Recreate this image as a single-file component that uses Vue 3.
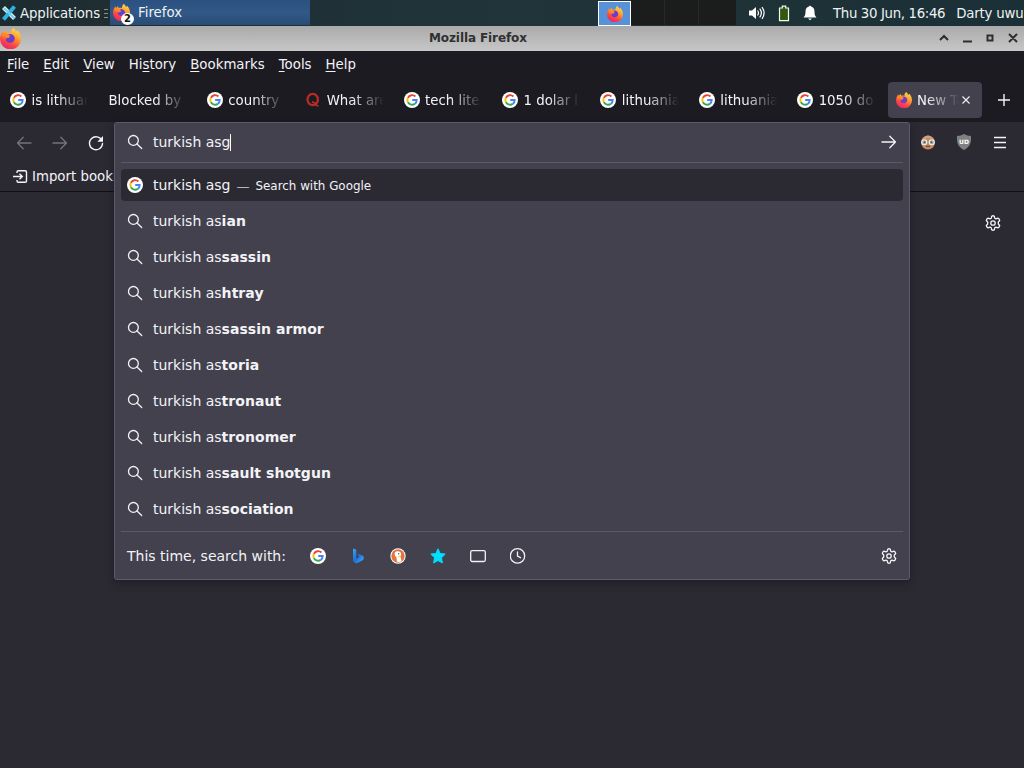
<template>
  <div class="desktop">
    <!-- Shared icon shapes -->
    <svg class="icon-defs" aria-hidden="true">
      <defs>
        <linearGradient id="fox-fill" x1="0.8" y1="0" x2="0.3" y2="1">
          <stop offset="0" stop-color="#ffe14a" />
          <stop offset="0.4" stop-color="#ff9a2e" />
          <stop offset="0.7" stop-color="#ff483f" />
          <stop offset="1" stop-color="#e52270" />
        </linearGradient>
        <linearGradient id="bing-fill" x1="0" y1="0" x2="1" y2="1">
          <stop offset="0" stop-color="#38a7ef" />
          <stop offset="0.5" stop-color="#1b6fe0" />
          <stop offset="1" stop-color="#43b9f2" />
        </linearGradient>
      </defs>
      <symbol id="google" viewBox="0 0 16 16">
        <circle cx="8" cy="8" r="8" fill="#fff" />
        <g fill="none" stroke-width="1.9">
          <path d="M11.4 4.5A4.7 4.7 0 0 0 3.9 5.8" stroke="#ea4335" />
          <path d="M3.9 5.8a4.7 4.7 0 0 0 0 4.5" stroke="#fbbc05" />
          <path d="M3.9 10.3a4.7 4.7 0 0 0 7 1.4" stroke="#34a853" />
          <path d="M10.9 11.7A4.6 4.6 0 0 0 12.7 8H8.2" stroke="#4285f4" />
        </g>
      </symbol>
      <symbol id="firefox" viewBox="0 0 16 16">
        <path d="M10.2 0c1 .7 1.6 1.7 1.8 2.7 1-.2 1.2-.5 1.3-1 1.7 1.7 2.7 4 2.7 6.5A8 8 0 0 1 0 8.4C0 6 .8 4 2.3 2.2l.4 1.7C3.4 3 4 2.5 4.9 2l.2 1.7c1.5-.3 2.5-.1 3.3.2C8.3 2.3 8.9.9 10.2 0z" fill="url(#fox-fill)" />
        <path d="M5.2 5.6c1.5-1.8 5.2-1.1 5.9 1.5.7 2.7-1.4 4.3-3.5 4.2-2.3-.1-3.8-2-3-3.9.8.5 1.7.3 2.5-.2.5-.4.6-.7.1-1-.5-.4-1.3-.6-2-.6z" fill="#6b3dcb" />
        <path d="M2.3 3.8c1-.2 2.2 0 3 .8.8.1 1.5.3 2.2.9-.2.8-1.3 1-1.9 1.4-.5.4-.5 1-.8 1.5-.4-1-.3-2 .1-2.6-1.1-.2-2 .4-2.9 1.3-.3-1.2-.1-2.3.3-3.3z" fill="#ff8a22" />
      </symbol>
      <symbol id="search" viewBox="0 0 16 16">
        <g fill="none" stroke="currentColor" stroke-width="1.3" stroke-linecap="round">
          <circle cx="6.4" cy="6.4" r="4.9" />
          <path d="M10 10l4.7 4.5" />
        </g>
      </symbol>
      <symbol id="gear" viewBox="0 0 16 16">
        <g fill="none" stroke="currentColor" stroke-width="1.3" stroke-linejoin="round">
          <path d="M6.7 1.2Q8 .3 9.3 1.2L9.7 3.2 11 3.9 13 3.2Q14.6 4 14.7 5.5L13.3 7V9L14.7 10.5Q14.6 12 13 12.8L11 12.1 9.7 12.8 9.3 14.8Q8 15.7 6.7 14.8L6.3 12.8 5 12.1 3 12.8Q1.4 12 1.3 10.5L2.7 9V7L1.3 5.5Q1.4 4 3 3.2L5 3.9 6.3 3.2Z" />
          <circle cx="8" cy="8" r="2.2" />
        </g>
      </symbol>
      <symbol id="arrow" viewBox="0 0 16 16">
        <path d="M1 8h13.5M8.8 2.3L14.5 8l-5.7 5.7" fill="none" stroke="currentColor" stroke-width="1.3" stroke-linecap="round" stroke-linejoin="round" />
      </symbol>
      <symbol id="quora" viewBox="0 0 16 16">
        <ellipse cx="7.7" cy="7.5" rx="5.2" ry="5.6" fill="none" stroke="#b92b27" stroke-width="2.3" />
        <path d="M7 10.2c2.2-.4 3 .6 3.8 2.2.6 1.200 1.3 1.700 2.700 1.500" fill="none" stroke="#b92b27" stroke-width="1.7" />
      </symbol>
      <symbol id="bing" viewBox="0 0 16 16">
        <path d="M3 .5l3.300 1.100v9.200L3.200 13.500zM6 10.800l3-1.600-1.500-3.700L13 7.700c1.300.8 1 3.600-.3 4.500L6.300 15.500 3.200 13.500z" fill="url(#bing-fill)" />
      </symbol>
      <symbol id="duck" viewBox="0 0 16 16">
        <circle cx="8" cy="8" r="7.7" fill="#fff" />
        <circle cx="8" cy="8" r="6.7" fill="#e2743f" />
        <path d="M4.700 4.900C5.200 2.600 9.900 2.500 10.900 5c.5 1.200.2 2.500-.5 3.400l1.200 4.900q-2.300 1.300-4.700.3L6.500 9.500C5.200 8.300 4.400 6.500 4.700 4.900z" fill="#fff" />
        <circle cx="8.700" cy="5.700" r=".7" fill="#2d4f8e" />
        <path d="M8.300 7.800l2.800-.3-.5 1.100-2.100.3z" fill="#fdd20a" />
      </symbol>
      <symbol id="star" viewBox="0 0 16 16">
        <path d="M8 .8l2.1 4.7 5.1.6-3.7 3.6.9 5.300L8 12.500 3.600 15l.9-5.300L.8 6.100l5.100-.6z" fill="#00ddff" stroke="#00ddff" stroke-linejoin="round" />
      </symbol>
      <symbol id="tabs" viewBox="0 0 16 16">
        <rect x=".7" y="2.6" width="14.6" height="10.9" rx="1.5" fill="none" stroke="currentColor" stroke-width="1.3" />
      </symbol>
      <symbol id="history" viewBox="0 0 16 16">
        <path d="M7.500.7a7.200 7.200 0 1 1 0 14.400 7.200 7.200 0 0 1 0-14.400zM7.500 4v4.200l3 1.500" fill="none" stroke="currentColor" stroke-width="1.3" stroke-linecap="round" />
      </symbol>
    </svg>

    <header class="panel">
      <div class="applications">
        <svg class="xfce" viewBox="0 0 16 16">
          <path d="M2.5 2.5l11 11" stroke="#e9f8fc" stroke-width="4" />
          <path d="M13.5 1.500l-11 13" stroke="#2fb0e2" stroke-width="4" />
          <path d="M3 3l10.5 10.5" stroke="#6ccded" stroke-width="2.2" />
        </svg>
        <span class="app-label">Applications</span>
        <i class="grip"></i>
      </div>
      <div class="task">
        <svg class="task-icon"><use href="#firefox" /></svg>
        <span class="task-count">2</span>
        <span>Firefox</span>
      </div>
      <div class="workspaces">
        <div class="workspace current"><svg class="i16"><use href="#firefox" /></svg></div>
        <div class="workspace"></div>
        <div class="workspace"></div>
        <div class="workspace"></div>
      </div>
      <div class="tray">
        <svg class="i16" viewBox="0 0 16 16">
          <path d="M0 5.500h3L7 2v12l-4-3.500H0z" fill="#fff" />
          <path d="M8.500 5.500q2 2.500 0 5M10.700 3.700q3.400 4.300 0 8.600M13 2.200q4.200 5.800 0 11.600" fill="none" stroke="#fff" stroke-width="1.2" />
        </svg>
        <svg class="battery" viewBox="0 0 12 16">
          <path d="M1.500 2.500h2.800V.7h3.400v1.800h2.800v12.700h-9z" fill="#34580f" stroke="#f4f7ed" stroke-width="1.2" />
        </svg>
        <svg class="bell" viewBox="0 0 14 16">
          <path d="M7 .5l1.500 1.300c2.500.8 3 3 3 5.300 0 3 .8 4.300 2 5.400H.5c1.200-1.100 2-2.400 2-5.400 0-2.300.5-4.500 3-5.300zM5 13.500h4L7 15.300z" fill="#fff" />
        </svg>
      </div>
      <span class="clock">Thu 30 Jun, 16:46</span>
      <span class="user">Darty uwu</span>
    </header>

    <div class="titlebar">
      <svg class="title-icon"><use href="#firefox" /></svg>
      <span class="title">Mozilla Firefox</span>
      <svg class="window-buttons" viewBox="0 0 84 16">
        <g fill="none" stroke="#2e2e2e" stroke-width="2">
          <path d="M1 10l4-4 4 4M24 11.500h9M48.500 5.500h5v5h-5zM70 4l8 8M78 4l-8 8" />
        </g>
      </svg>
    </div>

    <nav class="menubar">
      <span v-for="m in menus" :key="m.key + m.post" class="menu">{{ m.pre }}<u>{{ m.key }}</u>{{ m.post }}</span>
    </nav>

    <div class="tabstrip">
      <div v-for="(tab, i) in tabs" :key="i" class="tab" :class="{ selected: tab.selected }">
        <svg v-if="tab.icon" class="i16"><use :href="'#' + tab.icon" /></svg>
        <span class="tab-label">{{ tab.label }}</span>
        <svg v-if="tab.selected" class="close" viewBox="0 0 8 8">
          <path d="M.5.500l7 7M7.500.500l-7 7" stroke="currentColor" stroke-width="1.1" />
        </svg>
      </div>
      <svg class="new-tab" viewBox="0 0 12 12">
        <path d="M6 0v12M0 6h12" stroke="currentColor" stroke-width="1.4" />
      </svg>
    </div>

    <div class="toolbars">
      <div class="navbar">
        <svg class="i16 back"><use href="#arrow" /></svg>
        <svg class="i16 forward"><use href="#arrow" /></svg>
        <svg class="i16 reload" viewBox="0 0 16 16">
          <path d="M13.9 5.500A6.500 6.500 0 1 0 14.500 8.500" fill="none" stroke="currentColor" stroke-width="1.4" stroke-linecap="round" />
          <path d="M15 1v5.700H9.300z" fill="currentColor" />
        </svg>
        <div class="extensions">
          <svg class="i16" viewBox="0 0 16 16">
            <circle cx="8" cy="8.500" r="6.900" fill="#c18c68" />
            <path d="M2 5q6-7 12 0L8 4z" fill="#d0a17c" />
            <circle cx="4.200" cy="8.200" r="2.500" fill="#8fa7ad" stroke="#f4eee8" stroke-width="1.1" />
            <circle cx="11.800" cy="8.200" r="2.500" fill="#8fa7ad" stroke="#f4eee8" stroke-width="1.1" />
            <circle cx="4.800" cy="8.200" r=".8" fill="#384347" />
            <circle cx="11.200" cy="8.200" r=".8" fill="#384347" />
            <path d="M6 12.800q2-1.200 4 0" fill="none" stroke="#7e3e32" stroke-width="1.2" />
          </svg>
          <div class="shield">
            <svg class="i16" viewBox="0 0 16 16">
              <path d="M8 0q3 2 7 2c.3 6.500-.5 10.500-7 14C1.500 12.500.7 8.500 1 2q4 0 7-2z" fill="#808083" />
            </svg>
            <span>UD</span>
          </div>
          <svg class="i16" viewBox="0 0 16 16">
            <path d="M2 3.500h12M2 8.500h12M2 13.500h12" stroke="currentColor" stroke-width="1.4" />
          </svg>
        </div>
      </div>
      <div class="bookmarks">
        <svg class="i16" viewBox="0 0 16 16">
          <path d="M5 5V4q0-1.300 1.300-1.300h6.900q1.300 0 1.300 1.300v9q0 1.300-1.300 1.300H6.300Q5 14.300 5 13v-1M1 8.500h9.200M7.500 5.700l2.800 2.800-2.800 2.800" fill="none" stroke="currentColor" stroke-width="1.4" />
        </svg>
        <span>Import bookmarks…</span>
      </div>
    </div>

    <main class="page">
      <svg class="i16"><use href="#gear" /></svg>
    </main>

    <section class="urlbar">
      <div class="url-input">
        <svg class="i16"><use href="#search" /></svg>
        <span class="typed">turkish asg</span><i class="caret"></i>
        <svg class="i16 go"><use href="#arrow" /></svg>
      </div>
      <div class="results">
        <div class="result active">
          <svg class="i16"><use href="#google" /></svg>
          <span>turkish asg</span>
          <span class="dash">—</span>
          <span class="action">Search with Google</span>
        </div>
        <div v-for="s in suggestions" :key="s" class="result">
          <svg class="i16"><use href="#search" /></svg>
          <span>turkish as<b>{{ s }}</b></span>
        </div>
      </div>
      <div class="one-offs">
        <span class="one-off-label">This time, search with:</span>
        <svg v-for="e in engines" :key="e" class="i16 engine"><use :href="'#' + e" /></svg>
        <svg class="i16 settings"><use href="#gear" /></svg>
      </div>
    </section>
  </div>
</template>

<script setup>
const menus = [
  { pre: '', key: 'F', post: 'ile' },
  { pre: '', key: 'E', post: 'dit' },
  { pre: '', key: 'V', post: 'iew' },
  { pre: 'Hi', key: 's', post: 'tory' },
  { pre: '', key: 'B', post: 'ookmarks' },
  { pre: '', key: 'T', post: 'ools' },
  { pre: '', key: 'H', post: 'elp' },
]

const tabs = [
  { icon: 'google', label: 'is lithuania' },
  { icon: '', label: 'Blocked by' },
  { icon: 'google', label: 'country' },
  { icon: 'quora', label: 'What are' },
  { icon: 'google', label: 'tech lite' },
  { icon: 'google', label: '1 dolar lit' },
  { icon: 'google', label: 'lithuania' },
  { icon: 'google', label: 'lithuania' },
  { icon: 'google', label: '1050 do' },
  { icon: 'firefox', label: 'New Tab', selected: true },
]

const suggestions = [
  'ian',
  'sassin',
  'htray',
  'sassin armor',
  'toria',
  'tronaut',
  'tronomer',
  'sault shotgun',
  'sociation',
]

const engines = ['google', 'bing', 'duck', 'star', 'tabs', 'history']
</script>

<style>
body {
  margin: 0;
  background: #2b2a33;
}
</style>

<style scoped>
.desktop {
  position: relative;
  display: flex;
  flex-direction: column;
  width: 1024px;
  height: 768px;
  overflow: hidden;
  background: #2b2a33;
  color: #f3f3f7;
  font-family: "DejaVu Sans", sans-serif;
  font-size: 13.33px;
  white-space: nowrap;
}

.icon-defs {
  position: absolute;
  width: 0;
  height: 0;
}

svg {
  flex: none;
  display: block;
}

.i16 {
  width: 16px;
  height: 16px;
}

/* Desktop panel */
.panel {
  display: flex;
  align-items: center;
  flex: none;
  height: 26px;
  background: linear-gradient(90deg, #1d2c31, #203439 50%, #1b3036);
  color: #edf2f2;
}

.panel > * {
  flex: none;
}

.applications {
  display: flex;
  align-items: center;
  width: 110px;
}

.app-label {
  letter-spacing: -0.12px;
}

.xfce {
  width: 16px;
  height: 16px;
  margin: 0 3px 0 1px;
}

.grip {
  width: 4px;
  height: 7px;
  margin-left: 4px;
  border-top: 1px solid #879294;
  border-bottom: 1px solid #879294;
  background: linear-gradient(transparent 3px, #879294 3px, #879294 4px, transparent 4px);
}

.task {
  position: relative;
  display: flex;
  align-items: center;
  align-self: flex-start;
  box-sizing: border-box;
  width: 200px;
  height: 25px;
  padding-left: 3px;
  background: linear-gradient(#2c5181, #315887 50%, #294c75);
}

.task-icon {
  width: 17px;
  height: 17px;
  margin-right: 8px;
}

.task-count {
  position: absolute;
  left: 11px;
  top: 13px;
  width: 13px;
  height: 12px;
  border-radius: 50%;
  background: #fff;
  color: #111;
  font-size: 10px;
  font-weight: bold;
  line-height: 12px;
  text-align: center;
}

.workspaces {
  display: flex;
  align-self: stretch;
  margin-left: 288px;
}

.workspace {
  box-sizing: border-box;
  width: 34px;
  height: 25px;
  border-right: 1px solid #2a2725;
  background: #1b1c1c;
}

.workspace.current {
  display: flex;
  align-items: center;
  justify-content: center;
  width: 33px;
  margin-top: 1px;
  border: 1px solid #fff;
  background: #5792d9;
}

.workspace:last-child {
  width: 37px;
  border: 0;
}

.tray {
  display: flex;
  align-items: center;
  margin-left: 13px;
}

.battery {
  width: 12px;
  height: 17px;
  margin-left: 13px;
}

.bell {
  width: 14px;
  height: 16px;
  margin-left: 13px;
}

.clock {
  margin-left: 16px;
  letter-spacing: -0.35px;
}

.user {
  margin-left: 11px;
  letter-spacing: -0.2px;
}

/* Window frame */
.titlebar {
  display: flex;
  align-items: center;
  flex: none;
  height: 25px;
  background: linear-gradient(#aaa, #c7c7c7);
  box-shadow: inset 0 -1px #c4c8c7;
  color: #303030;
}

.title-icon {
  width: 21px;
  height: 21px;
}

.title {
  margin: -2px auto 0 408px;
  font-size: 12px;
  font-weight: bold;
  letter-spacing: -0.1px;
}

.window-buttons {
  width: 84px;
  height: 16px;
  margin: -1px 1px 0 0;
}

.menubar {
  display: flex;
  align-items: center;
  flex: none;
  gap: 14px;
  height: 27px;
  padding-left: 7px;
  background: #1c1b22;
}

.menu u {
  text-decoration: underline;
  text-underline-offset: 2px;
}

.tabstrip {
  display: flex;
  align-items: center;
  flex: none;
  height: 44px;
  background: #1c1b22;
}

.tab {
  display: flex;
  align-items: center;
  box-sizing: border-box;
  flex: none;
  width: 98.4px;
  height: 36px;
  padding: 0 10px;
}

.tab .i16 {
  margin-right: 5.5px;
}

.tab-label {
  flex: 1;
  overflow: hidden;
  mask-image: linear-gradient(to left, transparent, #000 32px);
}

.tab.selected {
  width: 94px;
  margin-left: 2px;
  padding: 0 12px 0 8px;
  border-radius: 4px;
  background: #42414d;
}

.close {
  width: 8px;
  height: 8px;
  margin-left: 3px;
}

.new-tab {
  width: 12px;
  height: 12px;
  margin-left: 16px;
}

.toolbars {
  flex: none;
  box-sizing: border-box;
  height: 70px;
  border-bottom: 1px solid #111016;
  background: #2b2a33;
}

.navbar {
  display: flex;
  align-items: center;
  box-sizing: border-box;
  height: 41px;
  padding: 0 16px;
}

.back,
.forward {
  color: #74737b;
}

.back {
  transform: scaleX(-1);
}

.forward,
.reload {
  margin-left: 20px;
}

.extensions {
  display: flex;
  gap: 20px;
  margin: -2px 0 0 auto;
}

.shield {
  position: relative;
}

.shield span {
  position: absolute;
  inset: 0;
  color: #fff;
  font-size: 6px;
  font-weight: bold;
  line-height: 15px;
  text-align: center;
}

.bookmarks {
  display: flex;
  align-items: center;
  gap: 4px;
  height: 26px;
  padding-left: 12px;
}

.page {
  display: flex;
  justify-content: flex-end;
  flex: 1;
  padding: 23px 23px 0 0;
}

/* Expanded address bar */
.urlbar {
  position: absolute;
  left: 114px;
  top: 122px;
  box-sizing: border-box;
  width: 796px;
  height: 458px;
  padding: 0 6px;
  border: 1px solid #5b5a66;
  border-radius: 3px;
  background: #42414d;
  box-shadow: 0 3px 10px rgba(0, 0, 0, 0.3);
  font-size: 14px;
}

.url-input {
  display: flex;
  align-items: center;
  box-sizing: border-box;
  height: 40px;
  padding: 0 6px 1px;
  border-bottom: 1px solid #5b5a66;
}

.typed {
  margin-left: 10px;
}

.caret {
  width: 1px;
  height: 17px;
  margin-left: -1px;
  background: #fff;
}

.go {
  margin-left: auto;
}

.results {
  padding: 4px 0 2px;
  border-bottom: 1px solid #5b5a66;
}

.result {
  display: flex;
  align-items: center;
  box-sizing: border-box;
  height: 32px;
  margin: 2px 0 4px;
  padding: 0 6px;
  border-radius: 4px;
}

.result b {
  letter-spacing: 0.05px;
}

.result .i16 {
  margin-right: 10px;
}

.result.active {
  background: #2b2a33;
}

.dash {
  margin: 2px 6px 0;
  font-size: 13px;
  color: #b5b5bd;
}

.action {
  margin-top: 2px;
  font-size: 11.9px;
}

.one-offs {
  display: flex;
  align-items: center;
  height: 48px;
  padding: 0 6px;
}

.one-off-label {
  margin-right: 24px;
}

.engine {
  margin-right: 24px;
}

.settings {
  margin-left: auto;
}
</style>
